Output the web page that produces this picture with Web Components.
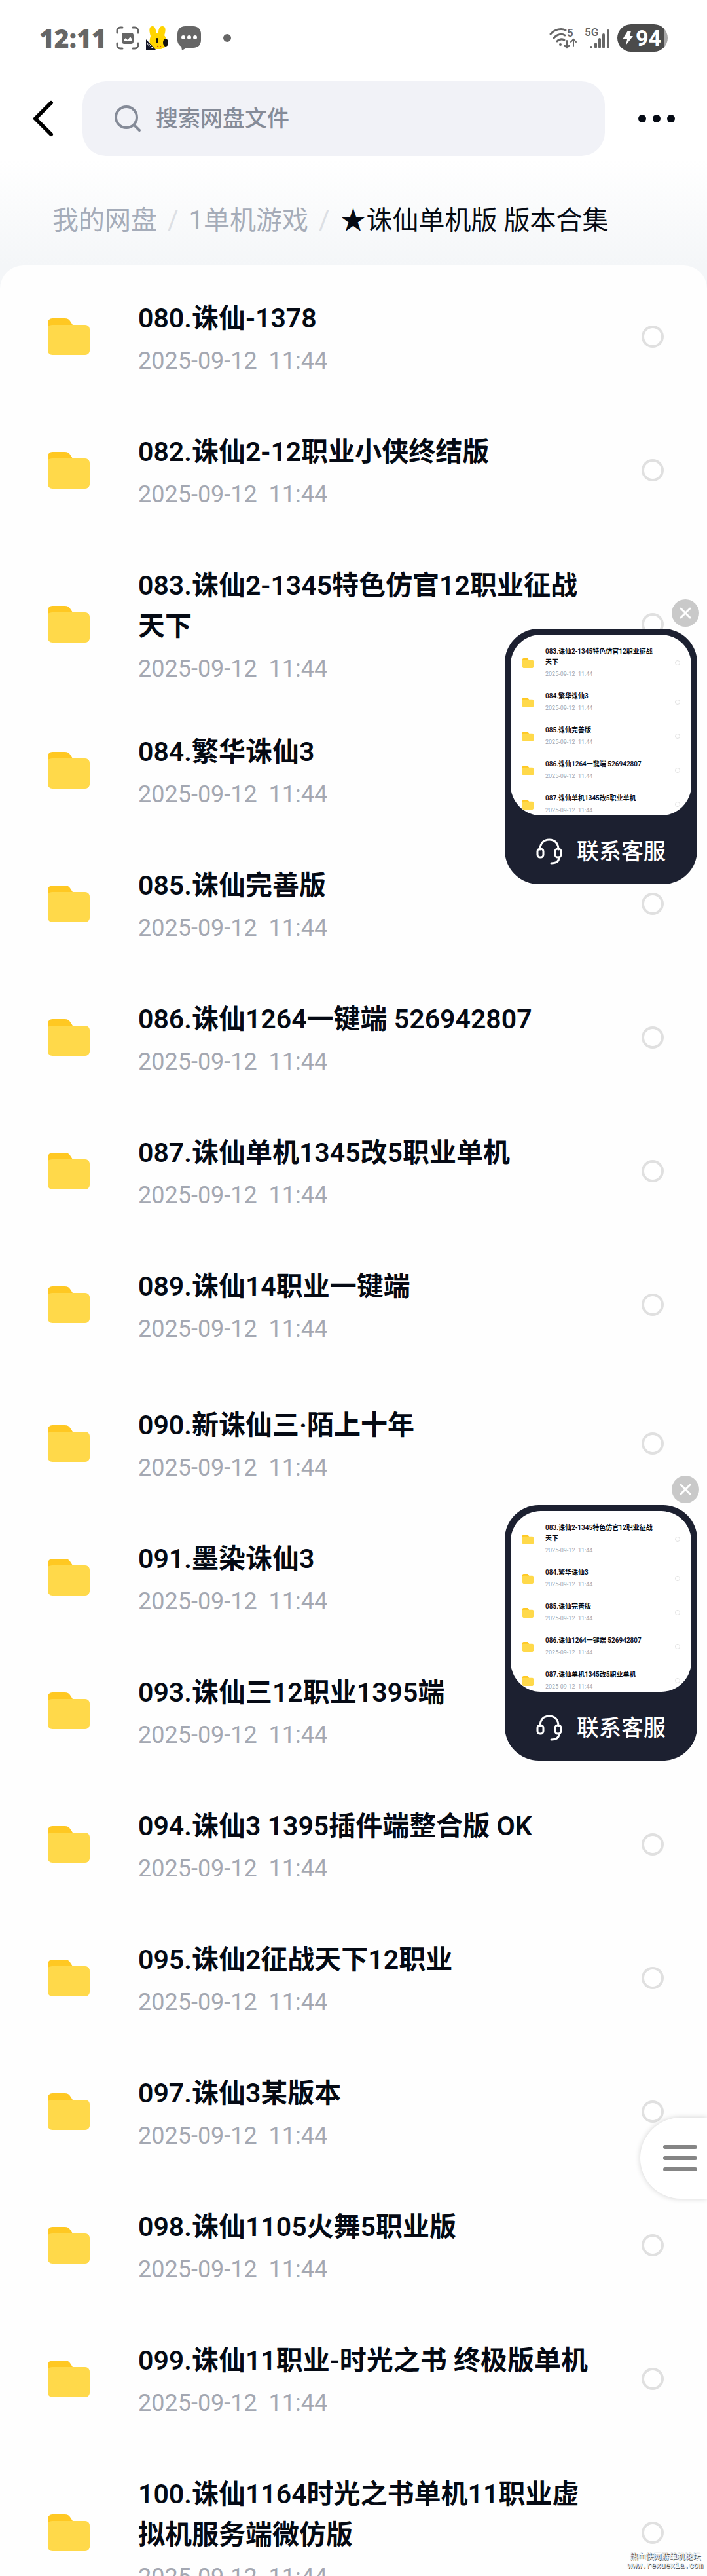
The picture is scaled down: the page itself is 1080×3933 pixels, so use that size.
<!DOCTYPE html>
<html lang="zh-CN">
<head>
<meta charset="UTF-8">
<meta name="viewport" content="width=device-width, initial-scale=1">
<title>我的网盘</title>
<style>
    body {
        margin: 0;
        background: #fff;
        color: #050a14;
        font-family: Roboto, "Noto Sans CJK SC", sans-serif;
    }
</style>
</head>
<body>
<drive-app></drive-app>

<script>
    const reset = `
        :host { box-sizing: border-box; }
        button, input, label, div, p { box-sizing: border-box; margin: 0; padding: 0; }
        button { border: 0; background: none; font: inherit; color: inherit; cursor: pointer; }
        svg { display: block; flex: none; overflow: visible; }
    `;

    // ---------- status bar ----------
    class StatusBar extends HTMLElement {
        constructor() {
            super();
            this.attachShadow({ mode: "open" });
            this.shadowRoot.innerHTML = `
            <style>
                ${reset}
                :host {
                    display: flex;
                    align-items: center;
                    justify-content: space-between;
                    padding: 36px 60px 0;
                    color: #666;
                }
                .side { display: flex; align-items: center; height: 44px; gap: 12px; }
                .time { font: 800 39px/44px "Open Sans", sans-serif; margin-right: 4px; }
                .left { gap: 10px; }
                .chat { margin: 0 24px 0 4px; }
                .battery {
                    display: flex;
                    align-items: center;
                    gap: 4px;
                    height: 42px;
                    padding: 0 10px 0 8px;
                    border-radius: 21px;
                    background: linear-gradient(90deg, #4b4b4b 93%, #a8a8a8 93%);
                    color: #fff;
                    font: 700 34px/42px Roboto, sans-serif;
                }
            </style>
            <div class="side left">
                <span class="time">12:11</span>
                <svg width="36" height="36" viewBox="0 0 36 36" fill="none" stroke="#666" stroke-width="3" stroke-linecap="round">
                    <path d="M2 10V7a5 5 0 0 1 5-5h3M26 2h3a5 5 0 0 1 5 5v3M34 26v3a5 5 0 0 1-5 5h-3M10 34H7a5 5 0 0 1-5-5v-3"/>
                    <rect x="9" y="10" width="18" height="17" rx="4" fill="#666" stroke="none"/>
                    <path d="M12 23v-2l3-3 3 3 4-5 2 3v4z" fill="#fff" stroke="none"/>
                </svg>
                <svg width="34" height="38" viewBox="0 0 34 38">
                    <path d="M7 16C5 9 4 2 9 1c5-1 6 5 7 11h3c0-6 1-12 7-11 5 1 4 8 2 14 3 3 4 8 4 12-1 6-6 8-9 9H14C8 34 3 28 7 16z" fill="#ffd400"/>
                    <ellipse cx="17" cy="23" rx="2" ry="4" fill="#111"/>
                    <ellipse cx="30" cy="26" rx="4" ry="6" fill="#111"/>
                    <path d="M17 31c2 2 5 2 6 0" stroke="#c22" stroke-width="1" fill="none"/>
                    <path d="M0 21l16 17H0z" fill="#141627"/>
                    <path d="M2 27l3 5M4 27l3 4M7 31l3 3M8 34l3-1" stroke="#fff" stroke-width="1"/>
                </svg>
                <svg class="chat" width="36" height="38" viewBox="0 0 36 38">
                    <path d="M12 1h12c8 0 12 5 12 12v9c0 7-4 12-12 12H14l-7 4-1-6c-4-2-6-6-6-10v-9C0 6 4 1 12 1z" fill="#666"/>
                    <g fill="#fff"><circle cx="9" cy="18" r="3"/><circle cx="18" cy="18" r="3"/><circle cx="27" cy="18" r="3"/></g>
                </svg>
                <svg width="12" height="12"><circle cx="6" cy="6" r="6" fill="#666"/></svg>
            </div>
            <div class="side">
                <svg width="42" height="34" viewBox="0 0 42 34" fill="none" stroke="#666" stroke-width="3" stroke-linecap="round">
                    <path d="M2 11C9 3 19 2 25 5M7 17c5-6 12-7 17-4M12 22c3-3 7-4 11-2"/>
                    <circle cx="17" cy="27" r="2" fill="#666" stroke="none"/>
                    <path d="M27 21v11M23 28l4 4 4-4M37 29V19M33 23l4-4 4 4" stroke-width="2"/>
                    <text x="27" y="15" fill="#666" stroke="none" font-family="Roboto" font-weight="500" font-size="17">5</text>
                </svg>
                <svg width="38" height="34" viewBox="0 0 38 34">
                    <text x="0" y="14" fill="#666" font-family="Roboto" font-weight="500" font-size="17">5G</text>
                    <path d="M10 31v0M17 26v5M23 19v12M29 12v19M36 6v25" stroke="#666" stroke-width="4" stroke-linecap="round"/>
                </svg>
                <div class="battery">
                    <svg width="16" height="24" viewBox="0 0 16 24"><path d="M8 1h5l-2 8h5L5 23l2-9H0z" fill="#fff"/></svg>
                    <span>94</span>
                </div>
            </div>
            `;
        }
    }

    // ---------- back / search / more ----------
    class SearchHeader extends HTMLElement {
        constructor() {
            super();
            this.attachShadow({ mode: "open" });
            this.shadowRoot.innerHTML = `
            <style>
                ${reset}
                :host {
                    display: flex;
                    align-items: center;
                    padding: 44px 48px 0 48px;
                }
                .back { margin-right: 42px; }
                .box {
                    flex: 1;
                    display: flex;
                    align-items: center;
                    gap: 22px;
                    height: 114px;
                    padding: 0 48px;
                    border-radius: 36px;
                    background: #f1f2f7;
                }
                input {
                    flex: 1;
                    min-width: 0;
                    border: 0;
                    outline: 0;
                    background: none;
                    font: 500 34px/48px Roboto, "Noto Sans CJK SC", sans-serif;
                    color: #050a14;
                }
                input::placeholder { color: #858b98; opacity: 1; }
                .more { margin-left: 48px; }
            </style>
            <button class="back" aria-label="返回">
                <svg width="36" height="58" viewBox="0 0 36 58" fill="none" stroke="#000" stroke-width="6" stroke-linecap="round" stroke-linejoin="round"><path d="M30 5L6 29l24 24"/></svg>
            </button>
            <label class="box">
                <svg width="42" height="42" viewBox="0 0 42 42" fill="none" stroke="#858b98" stroke-width="4" stroke-linecap="round"><circle cx="19" cy="19" r="16"/><path d="M32 32l7 7"/></svg>
                <input type="search" placeholder="搜索网盘文件" aria-label="搜索网盘文件">
            </label>
            <button class="more" aria-label="更多">
                <svg width="60" height="40" viewBox="0 0 60 40" fill="#050a14"><circle cx="9" cy="20" r="6"/><circle cx="31" cy="20" r="6"/><circle cx="53" cy="20" r="6"/></svg>
            </button>
            `;
        }
    }

    // ---------- breadcrumb, links are slotted ----------
    class CrumbNav extends HTMLElement {
        constructor() {
            super();
            this.attachShadow({ mode: "open" });
            this.shadowRoot.innerHTML = `
            <style>
                :host {
                    display: block;
                    padding: 70px 80px 39px;
                    font-size: 40px;
                    line-height: 58px;
                    white-space: nowrap;
                }
                nav { display: flex; gap: 16px; }
                ::slotted(a) { color: #a5acb9; text-decoration: none; }
                ::slotted(a[aria-current]) { color: #050a14; }
                ::slotted(span) { color: #dcdfe4; }
            </style>
            <nav aria-label="路径"><slot></slot></nav>
            `;
        }
    }

    // ---------- one folder in the list ----------
    class FileRow extends HTMLElement {
        connectedCallback() {
            if (this.shadowRoot) return;
            this.attachShadow({ mode: "open" });
            this.shadowRoot.innerHTML = `
            <style>
                ${reset}
                :host { display: block; }
                label {
                    display: flex;
                    align-items: center;
                    padding: 41px 66px 40px 73px;
                    cursor: pointer;
                }
                .folder { width: 64px; height: 56px; margin-right: 74px; }
                .info { flex: 1; min-width: 0; padding-top: 3px; }
                .name {
                    font-size: 41px;
                    font-weight: 600;
                    line-height: 62px;
                    overflow-wrap: anywhere;
                }
                .date {
                    margin-top: 10px;
                    font-size: 36px;
                    line-height: 48px;
                    color: #a4a8b2;
                    white-space: pre;
                }
                input {
                    appearance: none;
                    flex: none;
                    width: 34px;
                    height: 34px;
                    margin-left: 60px;
                    border: 4px solid #e0e0e0;
                    border-radius: 50%;
                    background: #fff;
                }
                input:checked { border-color: #ffd94a; }

                /* small version for the preview card */
                :host([compact]) label { padding: 9px 17px 9px 18px; }
                :host([compact]) .folder { width: 17px; height: 15px; margin-right: 18px; }
                :host([compact]) .info { padding-top: 0; }
                :host([compact]) .name { font-size: 10px; line-height: 16px; }
                :host([compact]) .date { margin-top: 2px; font-size: 9px; line-height: 16px; }
                :host([compact]) input { width: 8px; height: 8px; margin-left: 24px; border-width: 1px; }
                :host([compact]) .info { padding-right: 4px; }
            </style>
            <label>
                <svg class="folder" viewBox="0 0 64 56">
                    <path d="M7 0h19c4 0 6 1 8 4l4 6v10H0V7c0-4 3-7 7-7z" fill="#ffc822"/>
                    <path d="M0 12c2-1 4-2 7-2h50c4 0 7 3 7 7v32c0 4-3 7-7 7H7c-4 0-7-3-7-7z" fill="#ffd94a"/>
                </svg>
                <div class="info">
                    <div class="name">${this.getAttribute("name")}</div>
                    <div class="date">2025-09-12  11:44</div>
                </div>
                <input type="checkbox">
            </label>
            `;
        }
    }

    // ---------- floating "contact service" card ----------
    class ServiceCard extends HTMLElement {
        constructor() {
            super();
            this.attachShadow({ mode: "open" });
            this.shadowRoot.innerHTML = `
            <style>
                ${reset}
                :host {
                    display: block;
                    position: absolute;
                    right: 15px;
                    width: 294px;
                }
                .card {
                    padding: 9px 9px 0;
                    border-radius: 52px;
                    background: #1c2030;
                }
                .preview {
                    height: 276px;
                    padding-top: 9px;
                    border-radius: 46px;
                    background: #fff;
                    overflow: hidden;
                }
                .contact {
                    display: flex;
                    align-items: center;
                    justify-content: center;
                    gap: 22px;
                    width: 100%;
                    height: 105px;
                    padding-top: 4px;
                    color: #fff;
                    font-size: 34px;
                    font-weight: 500;
                    line-height: 48px;
                }
                .close {
                    position: absolute;
                    top: -45px;
                    right: -3px;
                    width: 42px;
                    height: 42px;
                    border-radius: 50%;
                    background: #c9c9c9;
                }
            </style>
            <button class="close" aria-label="关闭">
                <svg width="42" height="42" viewBox="0 0 42 42" stroke="#fff" stroke-width="3" stroke-linecap="round"><path d="M14 14l14 14M28 14L14 28"/></svg>
            </button>
            <div class="card">
                <div class="preview"><slot></slot></div>
                <button class="contact">
                    <svg width="40" height="40" viewBox="0 0 40 40" fill="none" stroke="#fff" stroke-width="3" stroke-linecap="round">
                        <path d="M6 17C6 8 11 2 20 2s14 6 14 15"/>
                        <rect x="2" y="16" width="9" height="13" rx="4"/>
                        <rect x="29" y="16" width="9" height="13" rx="4"/>
                        <path d="M35 29c0 6-4 9-12 9"/>
                    </svg>
                    <span>联系客服</span>
                </button>
            </div>
            `;
            this.shadowRoot.querySelector(".close").addEventListener("click", () => this.remove());
        }
    }

    // ---------- round menu tab on the right edge ----------
    class MenuTab extends HTMLElement {
        constructor() {
            super();
            this.attachShadow({ mode: "open" });
            this.shadowRoot.innerHTML = `
            <style>
                ${reset}
                :host { display: block; position: absolute; right: 0; }
                button {
                    display: flex;
                    flex-direction: column;
                    justify-content: center;
                    gap: 11px;
                    width: 102px;
                    height: 124px;
                    padding-left: 35px;
                    border-radius: 62px 0 0 62px;
                    background: #fff;
                    box-shadow: 0 0 8px rgba(0, 0, 0, 0.18);
                }
                i { width: 52px; height: 6px; border-radius: 3px; background: #858585; }
            </style>
            <button aria-label="菜单"><i></i><i></i><i></i></button>
            `;
        }
    }

    // ---------- whole page ----------
    const groups = [
        ["080.诛仙-1378", "082.诛仙2-12职业小侠终结版", "083.诛仙2-1345特色仿官12职业征战天下"],
        ["084.繁华诛仙3", "085.诛仙完善版", "086.诛仙1264一键端 526942807", "087.诛仙单机1345改5职业单机", "089.诛仙14职业一键端"],
        ["090.新诛仙三·陌上十年", "091.墨染诛仙3", "093.诛仙三12职业1395端", "094.诛仙3 1395插件端整合版 OK",
         "095.诛仙2征战天下12职业", "097.诛仙3某版本", "098.诛仙1105火舞5职业版",
         "099.诛仙11职业-时光之书 终极版单机", "100.诛仙1164时光之书单机11职业虚拟机服务端微仿版"],
    ];
    const row = (name) => `<file-row name="${name}"></file-row>`;
    const small = [groups[0][2], ...groups[1].slice(0, 4)]
        .map((name) => `<file-row compact name="${name}"></file-row>`)
        .join("");

    class DriveApp extends HTMLElement {
        constructor() {
            super();
            this.attachShadow({ mode: "open" });
            this.shadowRoot.innerHTML = `
            <style>
                ${reset}
                :host {
                    display: flex;
                    flex-direction: column;
                    position: relative;
                    height: 100vh;
                    overflow: hidden;
                    background: #f4f6f8;
                }
                header { background: linear-gradient(#fff 60%, #f4f6f8); }
                main {
                    flex: 1;
                    min-height: 0;
                    padding-top: 6px;
                    border-radius: 36px 36px 0 0;
                    background: #fefefe;
                    overflow: hidden;
                }
                .second { margin-top: -12px; }
                .third { margin-top: 8px; }
                .card-top { top: 960px; }
                .card-bottom { top: 2298px; }
                menu-tab { top: 3233px; }
                .mark {
                    position: absolute;
                    right: 6px;
                    bottom: 8px;
                    text-align: center;
                    font: 12px/13px "Liberation Mono", "Noto Sans CJK SC", monospace;
                    color: #fff;
                    text-shadow: 1px 1px 0 #555, 0 0 1px #777;
                }
            </style>
            <header>
                <status-bar></status-bar>
                <search-header></search-header>
                <crumb-nav>
                    <a href="#">我的网盘</a><span>/</span>
                    <a href="#">1单机游戏</a><span>/</span>
                    <a href="#" aria-current="page">★诛仙单机版 版本合集</a>
                </crumb-nav>
            </header>
            <main>
                <section>${groups[0].map(row).join("")}</section>
                <section class="second">${groups[1].map(row).join("")}</section>
                <section class="third">${groups[2].map(row).join("")}</section>
            </main>
            <service-card class="card-top">${small}</service-card>
            <service-card class="card-bottom">${small}</service-card>
            <menu-tab></menu-tab>
            <div class="mark"><p>热血侠网游单机论坛</p><p>www.rexuexia.com</p></div>
            `;
        }
    }

    customElements.define("status-bar", StatusBar);
    customElements.define("search-header", SearchHeader);
    customElements.define("crumb-nav", CrumbNav);
    customElements.define("file-row", FileRow);
    customElements.define("service-card", ServiceCard);
    customElements.define("menu-tab", MenuTab);
    customElements.define("drive-app", DriveApp);
</script>
</body>
</html>
